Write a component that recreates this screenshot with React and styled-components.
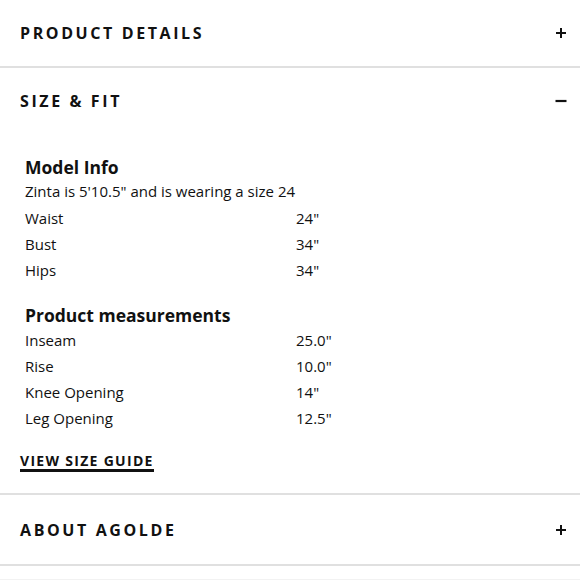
import React from "react";
import styled, { createGlobalStyle } from "styled-components";

const Global = createGlobalStyle`
  html, body { margin: 0; padding: 0; background: #fff; }
  body { font-family: "Open Sans", "Noto Sans", sans-serif; color: #111; -webkit-font-smoothing: antialiased; }
`;

const Page = styled.div`
  width: 580px;
  height: 580px;
  overflow: hidden;
  background: #fff;
`;

const Section = styled.section`
  border-bottom: 2px solid #e0e0e0;
`;

const Header = styled.div`
  height: ${(p) => p.$h || 66}px;
  padding: 0 13px 0 20px;
  display: flex;
  align-items: center;
  justify-content: space-between;
`;

const Title = styled.h2`
  margin: 0;
  font-size: 16px;
  font-weight: 700;
  letter-spacing: 2.6px;
  text-transform: uppercase;
  color: #111;
`;

const Icon = styled.svg`
  width: 12px;
  height: 12px;
  display: block;
`;

const Body = styled.div`
  padding: 21px 20px 21px 25px;
`;

const Group = styled.div`
  & + & { margin-top: 20px; }
`;

const GroupTitle = styled.h3`
  margin: 0;
  font-size: 17.5px;
  font-weight: 700;
  line-height: 24px;
`;

const Note = styled.p`
  margin: 0;
  font-size: 15px;
  line-height: 24px;
`;

const Rows = styled.div`
  display: grid;
  grid-template-columns: 271px auto;
  grid-auto-rows: 26px;
  align-items: center;
  font-size: 15px;
  margin-top: ${(p) => p.$gap || 0}px;
`;

const Cell = styled.span``;

const GuideLink = styled.a`
  display: block;
  width: fit-content;
  margin: 22px 0 0 -5px;
  font-size: 14px;
  font-weight: 700;
  letter-spacing: 1.3px;
  color: #111;
  text-decoration: none;
  border-bottom: 3px solid #111;
  line-height: 16px;
`;

const Tail = styled.div`
  height: 13px;
  border-bottom: 1px solid #f2f2f2;
`;

const Plus = () => (
  <Icon viewBox="0 0 12 12"><path d="M6 1v10M1 6h10" stroke="#111" strokeWidth="2" /></Icon>
);
const Minus = () => (
  <Icon viewBox="0 0 12 12"><path d="M0.5 6h11" stroke="#111" strokeWidth="2.2" /></Icon>
);

const model = [["Waist", "24\""], ["Bust", "34\""], ["Hips", "34\""]];
const product = [["Inseam", "25.0\""], ["Rise", "10.0\""], ["Knee Opening", "14\""], ["Leg Opening", "12.5\""]];

export default function App() {
  return (
    <Page>
      <Global />
      <Section>
        <Header>
          <Title>Product Details</Title>
          <Plus />
        </Header>
      </Section>
      <Section>
        <Header>
          <Title>Size &amp; Fit</Title>
          <Minus />
        </Header>
        <Body>
          <Group>
            <GroupTitle>Model Info</GroupTitle>
            <Note>Zinta is 5'10.5" and is wearing a size 24</Note>
            <Rows $gap={2}>
              {model.map(([k, v]) => (
                <React.Fragment key={k}><Cell>{k}</Cell><Cell>{v}</Cell></React.Fragment>
              ))}
            </Rows>
          </Group>
          <Group>
            <GroupTitle>Product measurements</GroupTitle>
            <Rows>
              {product.map(([k, v]) => (
                <React.Fragment key={k}><Cell>{k}</Cell><Cell>{v}</Cell></React.Fragment>
              ))}
            </Rows>
          </Group>
          <GuideLink href="#">VIEW SIZE GUIDE</GuideLink>
        </Body>
      </Section>
      <Section>
        <Header $h={69}>
          <Title>About Agolde</Title>
          <Plus />
        </Header>
      </Section>
      <Tail />
    </Page>
  );
}
